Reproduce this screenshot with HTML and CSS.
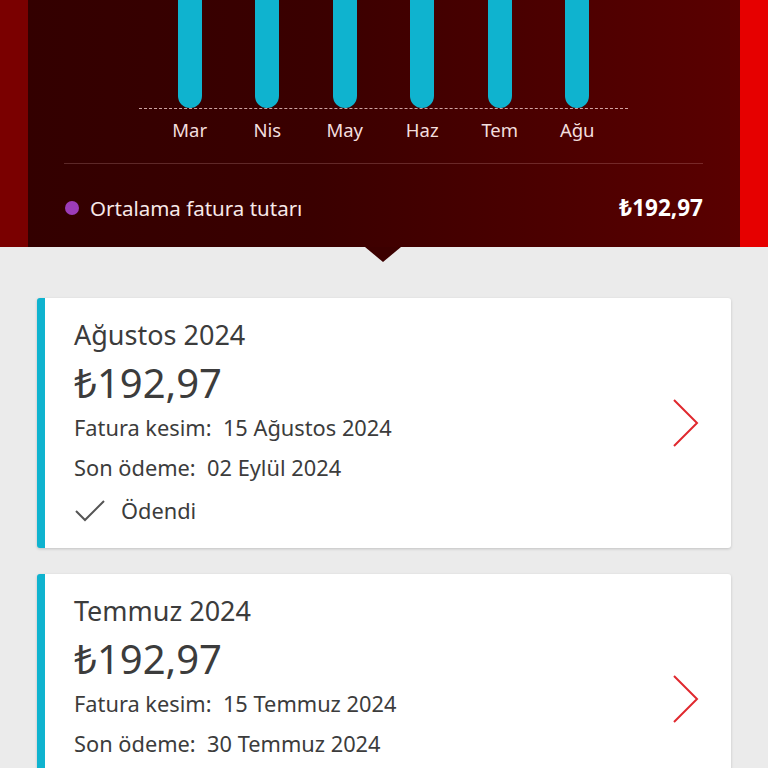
FILE: index.html
```html
<!DOCTYPE html>
<html lang="tr">
<head>
<meta charset="utf-8">
<link rel="stylesheet" href="styles.css">
</head>
<body>
<header class="hero">
  <div class="edge edge-left"></div>
  <div class="panel">
    <div class="chart">
      <div class="bars">
        <div class="col"><div class="bar"></div></div>
        <div class="col"><div class="bar"></div></div>
        <div class="col"><div class="bar"></div></div>
        <div class="col"><div class="bar"></div></div>
        <div class="col"><div class="bar"></div></div>
        <div class="col"><div class="bar"></div></div>
      </div>
      <div class="labels">
        <span>Mar</span><span>Nis</span><span>May</span><span>Haz</span><span>Tem</span><span>Ağu</span>
      </div>
    </div>
    <div class="legend">
      <span class="dot"></span>
      <span class="legend-text">Ortalama fatura tutarı</span>
      <span class="legend-amount">₺192,97</span>
    </div>
    <div class="pointer"></div>
  </div>
  <div class="edge edge-right"></div>
</header>

<main class="list">
  <article class="card">
    <div class="card-body">
      <div class="month">Ağustos 2024</div>
      <div class="amount">₺192,97</div>
      <div class="line">Fatura kesim:&nbsp; 15 Ağustos 2024</div>
      <div class="line">Son ödeme:&nbsp; 02 Eylül 2024</div>
      <div class="line status">
        <svg class="check" width="32" height="26" viewBox="0 0 32 26"><path d="M2 13 L11 22 L30 3" fill="none" stroke="#555" stroke-width="2"/></svg>
        <span>Ödendi</span>
      </div>
    </div>
    <svg class="chev" width="28" height="50" viewBox="0 0 28 50"><path d="M2 2 L25 25 L2 48" fill="none" stroke="#e0282e" stroke-width="2"/></svg>
  </article>

  <article class="card">
    <div class="card-body">
      <div class="month">Temmuz 2024</div>
      <div class="amount">₺192,97</div>
      <div class="line">Fatura kesim:&nbsp; 15 Temmuz 2024</div>
      <div class="line">Son ödeme:&nbsp; 30 Temmuz 2024</div>
      <div class="line status">
        <svg class="check" width="32" height="26" viewBox="0 0 32 26"><path d="M2 13 L11 22 L30 3" fill="none" stroke="#555" stroke-width="2"/></svg>
        <span>Ödendi</span>
      </div>
    </div>
    <svg class="chev" width="28" height="50" viewBox="0 0 28 50"><path d="M2 2 L25 25 L2 48" fill="none" stroke="#e0282e" stroke-width="2"/></svg>
  </article>
</main>
</body>
</html>
```

FILE: styles.css
```css
html, body {
  margin: 0;
  padding: 0;
}
body {
  width: 768px;
  height: 768px;
  overflow: hidden;
  background: #ebebeb;
  font-family: "Noto Sans", "Open Sans", sans-serif;
}

.hero {
  display: flex;
  height: 247px;
}
.edge {
  width: 28px;
  flex: none;
}
.edge-left {
  background: #7a0000;
}
.edge-right {
  background: #e60000;
}
.panel {
  flex: 1;
  position: relative;
  background: linear-gradient(90deg, #330000 0%, #3a0000 40%, #5a0000 100%);
  display: flex;
  flex-direction: column;
}

.chart {
  margin: 0 112px 0 111px;
}
.bars {
  display: grid;
  grid-template-columns: repeat(6, 1fr);
  padding: 0 12px;
  height: 108px;
  border-bottom: 1px dashed rgba(255, 220, 220, 0.75);
}
.col {
  display: flex;
  justify-content: center;
}
.bar {
  width: 24px;
  height: 108px;
  background: #0fb3cf;
  border-radius: 0 0 12px 12px;
}
.labels {
  display: grid;
  grid-template-columns: repeat(6, 1fr);
  height: 54px;
  border-bottom: 1px solid rgba(255, 200, 200, 0.2);
  margin: 0 -75px;
  padding: 0 87px;
}
.labels span {
  text-align: center;
  color: #f2dede;
  font-size: 18.5px;
  line-height: 22px;
  margin-top: 10px;
}

.legend {
  display: flex;
  align-items: center;
  padding: 0 37px;
  margin-top: 28px;
  color: #f7e9e9;
}
.dot {
  width: 14px;
  height: 14px;
  border-radius: 50%;
  background: #9c3cb8;
  margin-right: 11px;
}
.legend-text {
  font-size: 20.5px;
  line-height: 26px;
}
.legend-amount {
  margin-left: auto;
  font-size: 22.5px;
  font-weight: 700;
  color: #fff;
}

.pointer {
  position: absolute;
  left: 337px;
  bottom: -15px;
  width: 0;
  height: 0;
  border-left: 18px solid transparent;
  border-right: 18px solid transparent;
  border-top: 15px solid #3c0000;
}

.list {
  padding: 51px 37px 0 37px;
  display: flex;
  flex-direction: column;
  gap: 26px;
}
.card {
  background: #fff;
  border-left: 8px solid #0fb3cf;
  border-radius: 3px;
  box-shadow: 0 1px 3px rgba(0, 0, 0, 0.18);
  height: 250px;
  display: flex;
  align-items: center;
  padding: 0 31px 0 29px;
  flex: none;
}
.card-body {
  flex: 1;
  color: #3c3c3c;
  align-self: flex-start;
  padding-top: 19px;
}
.month {
  font-size: 27px;
  line-height: 36px;
}
.amount {
  font-size: 40px;
  line-height: 50px;
  margin-top: 5px;
}
.line {
  font-size: 21.8px;
  line-height: 40px;
}
.status {
  display: flex;
  align-items: center;
  gap: 15px;
  margin-top: 3px;
}
.check {
  display: block;
}
.chev {
  flex: none;
  display: block;
}
```
